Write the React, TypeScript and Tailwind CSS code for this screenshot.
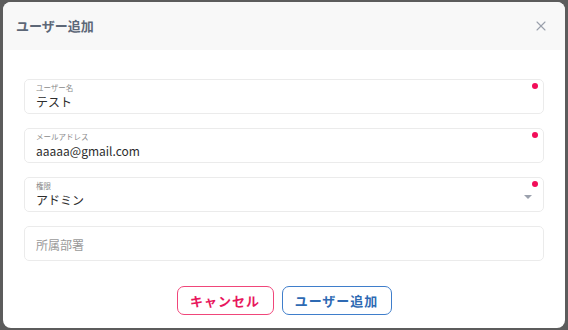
import { X } from "lucide-react";

const font = { fontFamily: '"Noto Sans CJK JP", "Noto Sans", sans-serif' };

function Field({
  label,
  value,
  required,
  select,
}: {
  label?: string;
  value?: string;
  required?: boolean;
  select?: boolean;
}) {
  return (
    <div className="relative h-[35px] rounded-[5px] border border-[#ebebeb] bg-white px-[11px]">
      {label ? (
        <>
          <div className="pt-[3px] text-[7.5px] leading-[10px] text-[#8a8a8a]">{label}</div>
          <div className="text-[12px] leading-[18px] text-[#2d2d2d]">{value}</div>
        </>
      ) : (
        <div className="pt-[9px] text-[12px] leading-[18px] text-[#9a9a9a]">{value}</div>
      )}
      {required && (
        <span className="absolute right-[5px] top-[3px] h-[6px] w-[6px] rounded-full bg-[#f20d59]" />
      )}
      {select && (
        <span className="absolute right-[11px] top-[17px] h-0 w-0 border-x-[4px] border-t-[4px] border-x-transparent border-t-[#9ba1ad]" />
      )}
    </div>
  );
}

export default function App() {
  return (
    <div className="h-[330px] w-[568px] bg-[#5c5c5c] pl-[3px] pt-[2px]" style={font}>
      <div className="flex h-[326px] w-[562px] flex-col overflow-hidden rounded-[8px] bg-white">
        <div className="flex h-[48px] shrink-0 items-center justify-between bg-[#f8f8f8] pl-[13px] pr-[16px]">
          <span className="text-[13px] font-bold text-[#5d6777]">ユーザー追加</span>
          <X className="h-[16px] w-[16px] text-[#9aa0ab]" strokeWidth={1.6} />
        </div>
        <div className="flex flex-col gap-[14px] px-[21px] pt-[29px]">
          <Field label="ユーザー名" value="テスト" required />
          <Field label="メールアドレス" value="aaaaa@gmail.com" required />
          <Field label="権限" value="アドミン" required select />
          <Field value="所属部署" />
        </div>
        <div className="flex justify-center gap-[8px] pt-[25px]">
          <button className="h-[29px] w-[97px] rounded-[7px] border border-[#f0467a] text-[13px] font-bold tracking-[1px] text-[#e8175d]">
            キャンセル
          </button>
          <button className="h-[29px] w-[110px] rounded-[7px] border border-[#3f7ecb] text-[13px] font-bold tracking-[1px] text-[#2e6ab3]">
            ユーザー追加
          </button>
        </div>
      </div>
    </div>
  );
}
